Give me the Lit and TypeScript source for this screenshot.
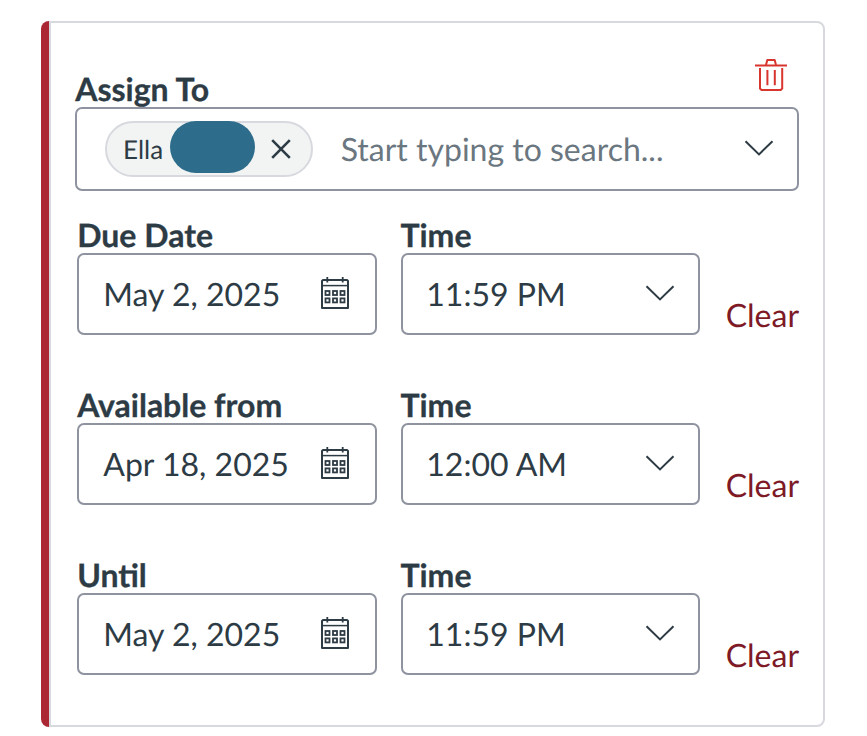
import { LitElement, html, css, svg } from "lit";
import { customElement } from "lit/decorators.js";

const chevron = html`<svg class="chevron" width="30" height="16" viewBox="0 0 30 16" fill="none" stroke="#2d3b45" stroke-width="2">
  ${svg`<path d="M1.5 1.2 15 14.4 28.5 1.2" />`}
</svg>`;

const calendar = html`<svg class="calendar" width="28" height="32" viewBox="0 0 28 32" fill="none" stroke="#2d3b45" stroke-width="2">
  ${svg`<path d="M2 3H26L27 4V31H1V4Z" stroke-linejoin="round" />
  <path d="M1 8.6H27" stroke-width="1.5" />
  <path d="M6.3 0V5.5M21.7 0V5.5" stroke-width="1.8" />`}
  ${[14, 21.4].map((y) =>
    [4.5, 12, 19.5].map((x) => svg`<rect x=${x} y=${y} width="4" height="4" stroke-width="1.8" />`)
  )}
</svg>`;

const trash = html`<svg class="trash" width="32" height="32" viewBox="0 0 32 32" fill="none" stroke="#d8352f" stroke-width="2">
  ${svg`<path d="M0 6.5H32" />
  <path d="M11 6 12.3 1H19.7L21 6" stroke-linejoin="round" />
  <path d="M5 9V29.5L6.5 31H25.7L27.2 29.5V9M12.4 11V26.3M19.8 11V26.3" />`}
</svg>`;

interface Row {
  label: string;
  date: string;
  time: string;
}

const rows: Row[] = [
  { label: "Due Date", date: "May 2, 2025", time: "11:59 PM" },
  { label: "Available from", date: "Apr 18, 2025", time: "12:00 AM" },
  { label: "Until", date: "May 2, 2025", time: "11:59 PM" },
];

@customElement("app-root")
export class AppRoot extends LitElement {
  static styles = css`
    :host {
      display: block;
      box-sizing: border-box;
      height: 736px;
      padding: 21px 42px 9px 41px;
      background: #fff;
      color: #2d3b45;
      font: 32px/38px Lato, sans-serif;
      text-rendering: geometricPrecision;
      overflow: hidden;
    }
    * { box-sizing: border-box; }
    svg { display: block; flex: none; }
    .card { display: flex; width: 784px; height: 706px; }
    .accent { flex: none; width: 8px; background: #ab2733; border-radius: 8px 0 0 8px; }
    .body {
      flex: 1;
      min-width: 0;
      border: 2px solid #d7d9de;
      border-radius: 0 8px 8px 0;
      padding: 36px 24px 0;
    }
    .head { display: flex; justify-content: space-between; height: 48px; padding-right: 12px; }
    .head .label { margin-top: 12px; }
    .label {
      height: 36px;
      padding-left: 0.2px;
      line-height: 36px;
      font-weight: 700;
      white-space: nowrap;
      -webkit-text-stroke: 0.3px currentColor;
    }
    .time .label { margin-left: -0.6px; padding-left: 0; }
    .box {
      display: flex;
      align-items: center;
      justify-content: space-between;
      height: 82px;
      border: 2px solid #8e939f;
      border-radius: 7px;
      padding: 0 26px 0 24.3px;
      white-space: nowrap;
    }
    .search { height: 84px; padding: 0 23px 0 28px; }
    .calendar { margin-bottom: 2px; }
    .chevron { margin-bottom: 2px; }
    .pill {
      display: flex;
      flex: none;
      height: 56px;
      width: 208px;
      border: 2px solid #d7d9de;
      border-radius: 28px;
      background: #f2f4f4;
      padding-left: 16px;
      font-size: 26px;
      line-height: 52px;
    }
    .name { width: 47px; }
    .redacted { width: 85px; height: 52px; border-radius: 26px; background: #2d6c8b; margin-top: -2px; }
    .close { margin: 16px 0 0 16px; }
    .placeholder { flex: 1; margin-left: 27.7px; color: #6b7780; }
    .row { display: flex; height: 118px; margin-bottom: 52px; }
    .rows { padding: 26px 0 0 2px; }
    .date { flex: none; width: 300px; margin-right: 24px; }
    .time { flex: none; width: 299px; }
    .time .box { padding: 0 23px 0 23.3px; }
    .clear { margin: 79px 0 0 25.7px; color: #7d1a26; }
  `;

  render() {
    return html`<div class="card">
      <div class="accent"></div>
      <div class="body">
        <div class="head"><div class="label">Assign To</div>${trash}</div>
        <div class="box search">
          <div class="pill">
            <span class="name">Ella</span>
            <span class="redacted"></span>
            <svg class="close" width="20" height="20" viewBox="0 0 20 20" stroke="#2d3b45" stroke-width="2.6">
              <path d="M1.2 1.2 18.8 18.8M18.8 1.2 1.2 18.8" />
            </svg>
          </div>
          <span class="placeholder">Start typing to search...</span>
          ${chevron}
        </div>
        <div class="rows">
          ${rows.map(
            (r) => html`<div class="row">
              <div class="date">
                <div class="label">${r.label}</div>
                <div class="box"><span>${r.date}</span>${calendar}</div>
              </div>
              <div class="time">
                <div class="label">Time</div>
                <div class="box"><span>${r.time}</span>${chevron}</div>
              </div>
              <div class="clear">Clear</div>
            </div>`
          )}
        </div>
      </div>
    </div>`;
  }
}
